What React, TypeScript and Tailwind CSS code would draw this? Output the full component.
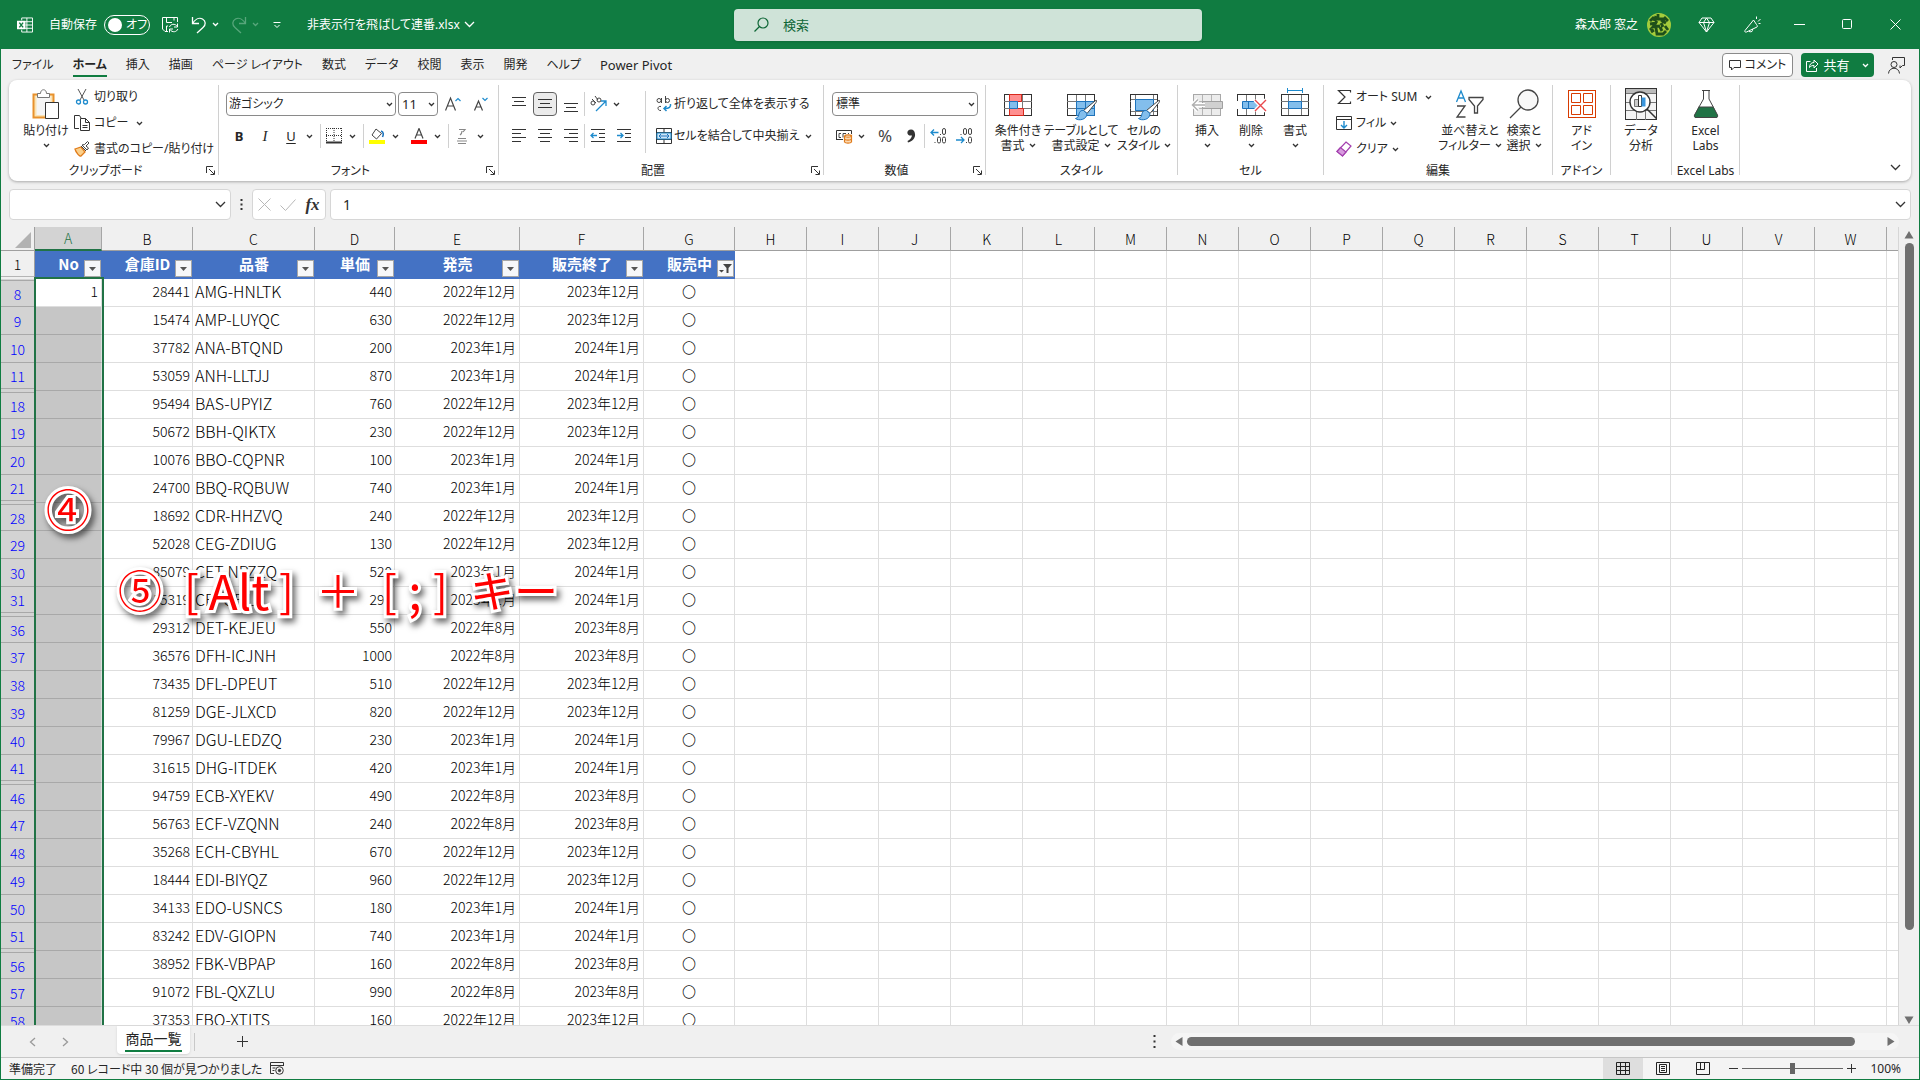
import type { ReactNode } from 'react';

const TABS = ['ファイル', 'ホーム', '挿入', '描画', 'ページ レイアウト', '数式', 'データ', '校閲', '表示', '開発', 'ヘルプ', 'Power Pivot'];

const EXTRA_COLUMNS = ['H', 'I', 'J', 'K', 'L', 'M', 'N', 'O', 'P', 'Q', 'R', 'S', 'T', 'U', 'V', 'W'];

const COLUMNS = [
  { letter: 'A', title: 'No', width: 'w-[67px]' },
  { letter: 'B', title: '倉庫ID', width: 'w-[91px]' },
  { letter: 'C', title: '品番', width: 'w-[122px]' },
  { letter: 'D', title: '単価', width: 'w-[80px]' },
  { letter: 'E', title: '発売', width: 'w-[125px]' },
  { letter: 'F', title: '販売終了', width: 'w-[124px]' },
  { letter: 'G', title: '販売中', width: 'w-[91px]' },
];

// row number, warehouse id, item code, price, release, end of sale
const ROWS: [number, number, string, number, string, string][] = [
  [8, 28441, 'AMG-HNLTK', 440, '2022年12月', '2023年12月'],
  [9, 15474, 'AMP-LUYQC', 630, '2022年12月', '2023年12月'],
  [10, 37782, 'ANA-BTQND', 200, '2023年1月', '2024年1月'],
  [11, 53059, 'ANH-LLTJJ', 870, '2023年1月', '2024年1月'],
  [18, 95494, 'BAS-UPYIZ', 760, '2022年12月', '2023年12月'],
  [19, 50672, 'BBH-QIKTX', 230, '2022年12月', '2023年12月'],
  [20, 10076, 'BBO-CQPNR', 100, '2023年1月', '2024年1月'],
  [21, 24700, 'BBQ-RQBUW', 740, '2023年1月', '2024年1月'],
  [28, 18692, 'CDR-HHZVQ', 240, '2022年12月', '2023年12月'],
  [29, 52028, 'CEG-ZDIUG', 130, '2022年12月', '2023年12月'],
  [30, 85079, 'CET-NPZZQ', 520, '2023年1月', '2024年1月'],
  [31, 15319, 'CFI-GFILF', 290, '2023年1月', '2024年1月'],
  [36, 29312, 'DET-KEJEU', 550, '2022年8月', '2023年8月'],
  [37, 36576, 'DFH-ICJNH', 1000, '2022年8月', '2023年8月'],
  [38, 73435, 'DFL-DPEUT', 510, '2022年12月', '2023年12月'],
  [39, 81259, 'DGE-JLXCD', 820, '2022年12月', '2023年12月'],
  [40, 79967, 'DGU-LEDZQ', 230, '2023年1月', '2024年1月'],
  [41, 31615, 'DHG-ITDEK', 420, '2023年1月', '2024年1月'],
  [46, 94759, 'ECB-XYEKV', 490, '2022年8月', '2023年8月'],
  [47, 56763, 'ECF-VZQNN', 240, '2022年8月', '2023年8月'],
  [48, 35268, 'ECH-CBYHL', 670, '2022年12月', '2023年12月'],
  [49, 18444, 'EDI-BIYQZ', 960, '2022年12月', '2023年12月'],
  [50, 34133, 'EDO-USNCS', 180, '2023年1月', '2024年1月'],
  [51, 83242, 'EDV-GIOPN', 740, '2023年1月', '2024年1月'],
  [56, 38952, 'FBK-VBPAP', 160, '2022年8月', '2023年8月'],
  [57, 91072, 'FBL-QXZLU', 990, '2022年8月', '2023年8月'],
  [58, 37353, 'FBO-XTITS', 160, '2022年12月', '2023年12月'],
];

const Chevron = ({ className = 'text-[#333]' }: { className?: string }) => (
  <svg className={`shrink-0 ${className}`} width="7" height="5" viewBox="0 0 7 5" fill="none" stroke="currentColor" strokeWidth="1.3">
    <path d="M1 1l2.5 2.5L6 1" />
  </svg>
);

const BigChevron = ({ className = 'text-[#333]' }: { className?: string }) => (
  <svg className={`shrink-0 ${className}`} width="11" height="7" viewBox="0 0 11 7" fill="none" stroke="currentColor" strokeWidth="1.3">
    <path d="M1 1l4.5 4.5L10 1" />
  </svg>
);

const Launcher = ({ label }: { label: string }) => (
  <button type="button" aria-label={label} className="absolute right-[3px] bottom-0">
    <svg width="9" height="9" viewBox="0 0 9 9" fill="none" stroke="#333">
      <path d="M.5 7V.5H7M3 3l5 5M8.5 4.5v4h-4" />
    </svg>
  </button>
);

const Group = ({ name, width, launcher, children }: { name: string; width: string; launcher?: boolean; children: ReactNode }) => (
  <section className={`relative flex h-[90px] shrink-0 flex-col border-r border-[#d0d0d0] ${width}`}>
    <div className="flex min-h-0 flex-1">{children}</div>
    <div className={`flex h-2 items-center justify-center whitespace-nowrap ${launcher ? 'pr-4' : ''}`}>
      {name}
      {launcher && <Launcher label={`${name}の設定`} />}
    </div>
  </section>
);

const BigButton = ({ width, icon, lines, drop }: { width: string; icon: ReactNode; lines: string[]; drop?: boolean }) => (
  <button type="button" className={`flex shrink-0 flex-col items-center self-start whitespace-nowrap leading-[15px] ${width}`}>
    <span className="flex h-[38px] items-center justify-center">{icon}</span>
    {lines.map((line, i) => (
      <span key={line} className="flex items-center gap-1">
        {line}
        {drop && i === 1 && <Chevron />}
      </span>
    ))}
    {drop && lines.length === 1 && (
      <span className="flex h-[14px] items-center">
        <Chevron />
      </span>
    )}
  </button>
);

const IconButton = ({ label, width = 'w-[26px]', children }: { label: string; width?: string; children: ReactNode }) => (
  <button type="button" aria-label={label} className={`flex h-6 shrink-0 items-center justify-center ${width}`}>
    {children}
  </button>
);

const DropButton = ({ label }: { label: string }) => (
  <IconButton label={label} width="w-4 pr-[6px]">
    <Chevron />
  </IconButton>
);

const Separator = () => <span className="h-6 w-px shrink-0 bg-[#d0d0d0]" />;

const Lines = ({ d }: { d: string }) => (
  <svg width="16" height="16" viewBox="0 0 16 16" stroke="#333" fill="none">
    <path d={d} />
  </svg>
);

const GridIcon = ({ children, faded }: { children?: ReactNode; faded?: boolean }) => (
  <svg width="32" height="34" viewBox="0 0 32 34" fill="none">
    <rect x="2.5" y="7.5" width="27" height="21" fill={faded ? '#ececec' : '#fff'} stroke={faded ? '#a8a8a8' : '#333'} />
    <path d="M2 14.5h28M2 21.5h28M11.5 8v20M20.5 8v20" stroke={faded ? '#b4b4b4' : '#777'} />
    {children}
  </svg>
);

const Brush = () => (
  <>
    <path d="M30 14c2-1.500 2 0 1 1.500l-9 11-3.500-3z" fill="#fff" stroke="#444" />
    <path d="M18.500 23.500c-4-.5-4.500 3-5 5.500-.5 1.500-2 2-3 2.500 3 2.500 11.500 1.500 11.500-5z" fill="#83beec" stroke="#1e74bd" />
  </>
);

const TitleBar = () => (
  <header className="grid h-[49px] shrink-0 grid-cols-[1fr_468px_1fr] items-center bg-[#107c41] pl-4 text-white">
    <div className="flex items-center whitespace-nowrap">
      <svg width="16" height="18" viewBox="0 0 17 18" fill="none" stroke="#fff">
        <path d="M5 4V1.500h11.500v15H5V14M10.500 1.500v15M5 5.500h11.500M9 9h7.500M5 12.500h11.500" />
        <path d="M0 4.500h9v9H0z" fill="#fff" stroke="none" />
        <path d="M2.500 6.500l4 5M6.500 6.500l-4 5" stroke="#107c41" strokeWidth="1.500" />
      </svg>
      <label className="ml-4 flex items-center gap-[7px]">
        自動保存
        <span className="relative flex h-5 w-[46px] items-center rounded-full border border-white">
          <input type="checkbox" role="switch" className="absolute inset-0 appearance-none" />
          <span className="ml-[3px] size-[14px] shrink-0 rounded-full bg-white" />
          <span className="ml-1 [font-feature-settings:'palt']">オフ</span>
        </span>
      </label>
      <button type="button" aria-label="保存" className="ml-3">
        <svg width="17" height="17" viewBox="0 0 17 17" fill="none" stroke="#fff">
          <path d="M6 15.500H3L.5 13V1.500h15V6M4.500 1.500v5H10M4.500 15v-5H6M12 1.500v3" />
          <path d="M7.500 11c.8-3 5.500-4 8-.5M15.500 7.500v3.500H12M15.800 13c-.8 3-5.500 4-8 .5M7.500 16.500V13H11" />
        </svg>
      </button>
      <button type="button" aria-label="元に戻す" className="ml-3 flex items-center gap-[5px]">
        <svg width="16" height="18" viewBox="0 0 16 18" fill="none" stroke="#fff" strokeWidth="1.300">
          <path d="M1.500 1v6.500H8M1.500 7.500C4 3.500 8 1 11.500 3c3.500 2 3.500 6 .5 8.500L6 17" />
        </svg>
        <Chevron className="text-white" />
      </button>
      <button type="button" aria-label="やり直し" className="ml-3 flex items-center gap-[5px]">
        <svg width="16" height="18" viewBox="0 0 16 18" fill="none" stroke="#58a67b" strokeWidth="1.300">
          <path d="M14.500 1v6.500H8M14.500 7.500C12 3.500 8 1 4.500 3c-3.500 2-3.500 6-.5 8.500L10 17" />
        </svg>
        <Chevron className="text-[#58a67b]" />
      </button>
      <button type="button" aria-label="クイック アクセス" className="ml-[14px]">
        <svg width="8" height="8" viewBox="0 0 8 8" fill="none" stroke="#fff">
          <path d="M.5 1.500h7M1.500 4L4 6.500 6.500 4" />
        </svg>
      </button>
      <button type="button" className="ml-[26px] flex items-center gap-1 [font-feature-settings:'palt']">
        非表示行を飛ばして連番.xlsx
        <BigChevron className="text-white" />
      </button>
    </div>
    <label className="flex h-8 items-center gap-[14px] rounded bg-[#cfe3d8] px-5 text-[#0e6636] shadow-sm">
      <svg width="15" height="15" viewBox="0 0 15 15" fill="none" stroke="currentColor" strokeWidth="1.200">
        <circle cx="9" cy="6" r="5" />
        <path d="M5.500 9.500L.5 14.500" />
      </svg>
      <input type="search" placeholder="検索" aria-label="検索" className="flex-1 bg-transparent text-[13px] outline-none placeholder:text-[#0e6636]" />
    </label>
    <div className="flex items-center justify-end whitespace-nowrap">
      <span>森太郎 窓之</span>
      <svg className="ml-[9px]" width="24" height="24" viewBox="0 0 24 24" fill="none">
        <circle cx="12" cy="12" r="12" fill="#a4cc3c" />
        <path d="M3 8l4-4M9 3l-2 5M11 1v4M5 6h14M21 8l-4-4M14 7l5 3M3 11l7-1M10 8l-4 6 7-1M14 10l2 4M15 7l3 3M3 17l3-3M4 19l3-2M9 15l1 6h6l3-3M13 14l2 4M18 13l3 4" stroke="#1e4f1a" strokeWidth="2.800" />
      </svg>
      <button type="button" aria-label="プレミアム" className="ml-3 flex w-[46px] justify-center">
        <svg width="17" height="16" viewBox="0 0 17 16" fill="none" stroke="#fff">
          <path d="M4 1h9l3 4.500L8.500 15 1 5.500zM1 5.500h15M5.500 5.500L8.500 15l3-9.500L8.500 1z" />
        </svg>
      </button>
      <button type="button" aria-label="新機能" className="flex w-[46px] justify-center">
        <svg width="17" height="17" viewBox="0 0 17 17" fill="none" stroke="#fff">
          <path d="M9.500 4L1 14.500c-.8 1.500.5 1.800 1.500 1.500L13 11c1-1 0-1.500-.5-2.500L9.500 4zM5 15.500c3 1 4-.5 3.500-2.500M12.500 3V.5M14 5.500L16.500 3M14.500 7.500h2" />
        </svg>
      </button>
      <button type="button" aria-label="最小化" className="flex w-12 justify-center">
        <svg width="11" height="11" viewBox="0 0 11 11" stroke="#fff">
          <path d="M0 5.500h11" />
        </svg>
      </button>
      <button type="button" aria-label="最大化" className="flex w-12 justify-center">
        <svg width="11" height="11" viewBox="0 0 11 11" fill="none" stroke="#fff">
          <rect x=".5" y=".5" width="9" height="9" rx="1" />
        </svg>
      </button>
      <button type="button" aria-label="閉じる" className="flex w-12 justify-center">
        <svg width="11" height="11" viewBox="0 0 11 11" stroke="#fff">
          <path d="M.5 .5l10 10M10.500 .5l-10 10" />
        </svg>
      </button>
    </div>
  </header>
);

const TabRow = () => (
  <nav className="flex h-[31px] shrink-0 items-end gap-[19px] pr-[14px] pb-[3px] pl-[11px] [font-feature-settings:'palt']">
    {TABS.map((tab) => (
      <button
        key={tab}
        type="button"
        className={`h-6 border-b-2 leading-6 whitespace-nowrap ${tab === 'ホーム' ? 'border-[#107c41] font-bold' : 'border-transparent'} ${tab === 'Power Pivot' ? 'text-[13px]' : 'text-[12px]'}`}
      >
        {tab}
      </button>
    ))}
    <div className="ml-auto flex items-center">
      <button type="button" className="flex h-6 w-[71px] items-center justify-center gap-1 rounded border border-[#8a8a8a] bg-white">
        <svg width="12" height="12" viewBox="0 0 12 12" fill="none" stroke="#333">
          <path d="M.5 1.500h11v7H5L2.500 11V8.500h-2z" />
        </svg>
        コメント
      </button>
      <button type="button" className="ml-2 flex h-6 w-[73px] items-center justify-center gap-1 rounded bg-[#107c41] text-[13px] text-white">
        <svg width="13" height="13" viewBox="0 0 13 13" fill="none" stroke="#fff">
          <path d="M4.500 2.500h-4v10h10V9M8 1v2.500C5 3.500 3.500 5.500 3.500 8.500 5 6.500 6.500 6.500 8 6.500V9l4-4z" />
        </svg>
        共有
        <span className="ml-2 flex">
          <Chevron className="text-white" />
        </span>
      </button>
      <button type="button" aria-label="共同編集" className="ml-[14px]">
        <svg width="17" height="17" viewBox="0 0 17 17" fill="none" stroke="#333">
          <circle cx="6" cy="7.500" r="3" />
          <path d="M.5 16.500c.5-7 10.500-7 11 0M4.500 3V.5h12v8h-2L12 11V8.500" />
        </svg>
      </button>
    </div>
  </nav>
);

const Ribbon = () => (
  <div className="mx-2 flex h-[101px] shrink-0 items-start rounded-lg bg-white pt-[5px] text-[#262626] shadow-[0_1px_3px_rgba(0,0,0,0.3)] [font-feature-settings:'palt']">
    <Group name="クリップボード" width="w-[210px]" launcher>
      <div className="flex gap-1 pl-[13px]">
        <BigButton
          width="w-[48px]"
          lines={['貼り付け']}
          drop
          icon={
            <svg width="28" height="32" viewBox="0 0 28 32" fill="none">
              <path d="M1.500 6.500h20v23h-20z" fill="#fbe3b3" stroke="#e8912d" strokeWidth="2" />
              <path d="M4.500 8h14v19h-14z" fill="#f5f5f5" />
              <path d="M5.500 9.500V5.500h3c0-5 6-5 6 0h3v4z" fill="#fff" stroke="#777" />
              <path d="M13.500 14.500h13v16h-13z" fill="#fff" stroke="#333" />
            </svg>
          }
        />
        <div className="flex flex-col">
          <button type="button" className="flex h-[26px] shrink-0 items-center gap-1 pb-[2px]">
            <svg width="16" height="16" viewBox="0 0 16 16" fill="none">
              <path d="M4 0l6 11M12 0L6 11" stroke="#555" />
              <circle cx="4.500" cy="13" r="2" stroke="#1e8bcd" strokeWidth="1.300" />
              <circle cx="11.500" cy="13" r="2" stroke="#1e8bcd" strokeWidth="1.300" />
            </svg>
            切り取り
          </button>
          <button type="button" className="flex h-[26px] shrink-0 items-center gap-1 pb-[2px]">
            <svg width="16" height="16" viewBox="0 0 16 16" fill="none" stroke="#333">
              <path d="M5 13.500H.5V.5h5M7 3L5.500 .5M6.500 3.500h5l4 4v8h-9zM11.500 3.500v4h4M8.500 10.500h5M8.500 12.500h5" />
            </svg>
            コピー
            <span className="ml-1 flex">
              <Chevron />
            </span>
          </button>
          <button type="button" className="flex h-[26px] shrink-0 items-center gap-1 pb-[2px] whitespace-nowrap">
            <svg width="16" height="16" viewBox="0 0 16 16" fill="none">
              <path d="M1 8l6-2 4 5-4 4c-1 1-5-3-6-7z" fill="#fbd08b" stroke="#e07b1a" strokeWidth="1.300" />
              <path d="M7 5l5 5M8 4l5 5 1.500-2L12 5l3-3-1.500-1.500L10.500 3.500z" stroke="#444" fill="#fff" />
            </svg>
            書式のコピー/貼り付け
          </button>
        </div>
      </div>
    </Group>

    <Group name="フォント" width="w-[280px]" launcher>
      <div className="flex flex-col gap-2 pl-[7px] pt-[7px]">
        <div className="flex items-center gap-[2px]">
          <label className="relative flex items-center">
            <select aria-label="フォント" className="h-6 w-[170px] appearance-none rounded border border-[#8a8a8a] bg-white pl-[2px] leading-[14px]">
              <option>游ゴシック</option>
            </select>
            <Chevron className="pointer-events-none absolute right-[3px] text-[#333]" />
          </label>
          <label className="relative flex items-center">
            <select aria-label="フォント サイズ" className="h-6 w-10 appearance-none rounded border border-[#8a8a8a] bg-white pl-[3px] text-[13px] leading-[14px]">
              <option>11</option>
            </select>
            <Chevron className="pointer-events-none absolute right-[3px] text-[#333]" />
          </label>
          <IconButton label="フォント サイズの拡大">
            <svg width="16" height="16" viewBox="0 0 16 16" fill="none" stroke="#444" strokeWidth="1.200">
              <path d="M.5 14.500L5.500 2l5 12.500M2.500 10h6" />
              <path d="M10.500 5L13 2.500 15.500 5" stroke="#1e8bcd" />
            </svg>
          </IconButton>
          <IconButton label="フォント サイズの縮小">
            <svg width="16" height="16" viewBox="0 0 16 16" fill="none" stroke="#444" strokeWidth="1.200">
              <path d="M1.500 14.500L5.500 5l4 9.500M3 11h5" />
              <path d="M9.500 2L12 4.500 14.500 2" stroke="#1e8bcd" />
            </svg>
          </IconButton>
        </div>
        <div className="flex items-center">
          <IconButton label="太字"><b className="text-[13px]">B</b></IconButton>
          <IconButton label="斜体"><i className="font-['Liberation_Serif',serif] text-[15px]">I</i></IconButton>
          <IconButton label="下線"><u className="text-[13px] underline-offset-2">U</u></IconButton>
          <DropButton label="下線の種類" />
          <Separator />
          <IconButton label="罫線">
            <svg width="16" height="16" viewBox="0 0 16 16" stroke="#333">
              <path d="M0 .5h16M.5 0v14M15.500 0v14M8 0v14M0 7.500h16" strokeDasharray="1 1" />
              <path d="M0 14.500h16" strokeWidth="2" />
            </svg>
          </IconButton>
          <DropButton label="罫線の種類" />
          <Separator />
          <IconButton label="塗りつぶしの色">
            <svg width="16" height="16" viewBox="0 0 16 16" fill="none">
              <path d="M7 1l5.500 4.500-5 5.500L3 7z" stroke="#444" />
              <path d="M12 3c3 1 2.500 4 1.500 6" stroke="#1e74bd" strokeWidth="1.600" />
              <path d="M0 12h16v4H0z" fill="#ffff00" />
            </svg>
          </IconButton>
          <DropButton label="塗りつぶしの種類" />
          <IconButton label="フォントの色">
            <svg width="16" height="16" viewBox="0 0 16 16" fill="none">
              <path d="M4 10.500L8 .5l4 10M5.500 7h5" stroke="#444" strokeWidth="1.200" />
              <path d="M0 12h16v4H0z" fill="#ff0000" />
            </svg>
          </IconButton>
          <DropButton label="フォントの色の種類" />
          <Separator />
          <IconButton label="ふりがな">
            <svg width="12" height="17" viewBox="0 0 12 17" fill="none" stroke="#888">
              <path d="M3 1.500h6L7 4M6 3c0 2-.5 3-2 4M2 10.500h8M1 13h10M2 15.500h8" strokeWidth="1.200" />
            </svg>
          </IconButton>
          <DropButton label="ふりがなの種類" />
        </div>
      </div>
    </Group>

    <Group name="配置" width="w-[325px]" launcher>
      <div className="flex flex-col gap-2 pl-[7px] pt-[7px]">
        <div className="flex">
          <IconButton label="上揃え"><Lines d="M1 1.500h14M3 5.500h10M1 9.500h14" /></IconButton>
          <button type="button" aria-label="上下中央揃え" className="mx-px flex size-6 items-center justify-center rounded border border-[#616161] bg-[#ebebeb]">
            <Lines d="M1 3.500h14M3 7.500h10M1 11.500h14" />
          </button>
          <IconButton label="下揃え"><Lines d="M1 7.500h14M3 11.500h10M1 15.500h14" /></IconButton>
          <Separator />
          <IconButton label="方向">
            <svg width="17" height="16" viewBox="0 0 17 16" fill="none">
              <circle cx="3" cy="7" r="2" stroke="#444" />
              <circle cx="9" cy="4" r="2" stroke="#444" />
              <path d="M2 3l4 4M5 0l3 4" stroke="#444" />
              <path d="M6 15l9.500-9.500M11 5h5v5" stroke="#1e8bcd" strokeWidth="1.300" />
            </svg>
          </IconButton>
          <DropButton label="方向の種類" />
        </div>
        <div className="flex">
          <IconButton label="左揃え"><Lines d="M1 1.500h14M1 5.500h9M1 9.500h14M1 13.500h9" /></IconButton>
          <IconButton label="中央揃え"><Lines d="M1 1.500h14M3 5.500h10M1 9.500h14M3 13.500h10" /></IconButton>
          <IconButton label="右揃え"><Lines d="M1 1.500h14M6 5.500h9M1 9.500h14M6 13.500h9" /></IconButton>
          <Separator />
          <IconButton label="インデントを減らす">
            <svg width="16" height="16" viewBox="0 0 16 16" fill="none" stroke="#333">
              <path d="M1 1.500h14M9 5.500h6M9 9.500h6M1 13.500h14" />
              <path d="M7 7.500H1M3.500 5L1 7.500 3.500 10" stroke="#1e8bcd" strokeWidth="1.300" />
            </svg>
          </IconButton>
          <IconButton label="インデントを増やす">
            <svg width="16" height="16" viewBox="0 0 16 16" fill="none" stroke="#333">
              <path d="M1 1.500h14M9 5.500h6M9 9.500h6M1 13.500h14" />
              <path d="M1 7.500h6M4.500 5L7 7.500 4.500 10" stroke="#1e8bcd" strokeWidth="1.300" />
            </svg>
          </IconButton>
        </div>
      </div>
      <div className="ml-2 mt-[6px] h-[62px] w-px bg-[#d0d0d0]" />
      <div className="flex flex-col gap-2 pl-[10px] pt-[7px]">
        <button type="button" className="flex h-6 items-center gap-[2px] whitespace-nowrap">
          <svg width="16" height="16" viewBox="0 0 16 16" fill="none" stroke="#444">
            <circle cx="3" cy="4.500" r="2" />
            <path d="M5.500 2v5M9.500 0v7M5 10.500c-4-1-4 4.500 0 4" />
            <circle cx="11.500" cy="4.500" r="2" />
            <path d="M14.500 8c.5 3-1 4.500-6 4.500M10.500 10L8 12.500l2.500 2.500" stroke="#1e8bcd" strokeWidth="1.500" />
          </svg>
          折り返して全体を表示する
        </button>
        <button type="button" className="flex h-6 items-center gap-[2px] whitespace-nowrap">
          <svg width="16" height="16" viewBox="0 0 16 16" fill="none" stroke="#333">
            <path d="M.5 .5h15v15H.5zM.5 4.500h15M.5 11.500h15M8 .5v4M8 11.500v4" />
            <path d="M1 5h14v6H1z" fill="#cfe6f7" stroke="#1e8bcd" />
            <path d="M3 8h10M5 6L3 8l2 2M11 6l2 2-2 2" stroke="#1e74bd" />
          </svg>
          セルを結合して中央揃え
          <span className="ml-1 flex">
            <Chevron />
          </span>
        </button>
      </div>
    </Group>

    <Group name="数値" width="w-[162px]" launcher>
      <div className="flex flex-col gap-2 pl-2 pt-[7px]">
        <label className="relative flex items-center">
          <select aria-label="表示形式" className="h-6 w-[146px] appearance-none rounded border border-[#8a8a8a] bg-white pl-[3px] leading-[14px]">
            <option>標準</option>
          </select>
          <Chevron className="pointer-events-none absolute right-[3px] text-[#333]" />
        </label>
        <div className="flex items-center">
          <IconButton label="通貨表示形式" width="w-6">
            <svg width="18" height="16" viewBox="0 0 18 16" fill="none">
              <path d="M1 11.500h7M1.500 11.500v-9h15V6" stroke="#333" />
              <path d="M6 5.500H4v4h2M8 9.500v-4h3M14 5.500h-1" stroke="#444" />
              <path d="M9.500 8v6c1 1.500 6 1.500 7 0V8c-1 1.500-6 1.500-7 0 1-1.500 6-1.500 7 0M9.500 11c1 1.500 6 1.500 7 0" fill="#fbd9b3" stroke="#e07b1a" strokeWidth="1.200" />
            </svg>
          </IconButton>
          <DropButton label="通貨の種類" />
          <IconButton label="パーセント スタイル"><span className="text-[17px] text-[#444]">%</span></IconButton>
          <IconButton label="桁区切りスタイル">
            <svg width="9" height="14" viewBox="0 0 9 14" fill="#333">
              <path d="M4 .5c-5 0-5 7 1 6C4.500 9 3 11 .5 12l.5 1.500C6 12 8.500 8.500 8 5 7.700 2 6.500 .5 4 .5z" />
            </svg>
          </IconButton>
          <Separator />
          <IconButton label="小数点以下の表示桁数を増やす">
            <svg width="17" height="16" viewBox="0 0 17 16" fill="none" stroke="#444">
              <path d="M8.500 4.500H1M4 1.500l-3 3 3 3" stroke="#1e8bcd" strokeWidth="1.300" />
              <rect x="12.500" y=".5" width="3" height="6" rx="1.500" />
              <rect x="7.500" y="9" width="3" height="6" rx="1.500" />
              <rect x="12.500" y="9" width="3" height="6" rx="1.500" />
              <path d="M10 6.500h1M4.500 14.500h1" />
            </svg>
          </IconButton>
          <IconButton label="小数点以下の表示桁数を減らす">
            <svg width="17" height="16" viewBox="0 0 17 16" fill="none" stroke="#444">
              <path d="M0 12h8M5 9l3 3-3 3" stroke="#1e8bcd" strokeWidth="1.300" />
              <rect x="7.500" y=".5" width="3" height="6" rx="1.500" />
              <rect x="12.500" y=".5" width="3" height="6" rx="1.500" />
              <rect x="12.500" y="9" width="3" height="6" rx="1.500" />
              <path d="M4.500 6.500h1M10 14.500h1" />
            </svg>
          </IconButton>
        </div>
      </div>
    </Group>

    <Group name="スタイル" width="w-[192px]">
      <div className="flex pl-[7px]">
        <BigButton
          width="w-[50px]"
          lines={['条件付き', '書式']}
          drop
          icon={
            <GridIcon>
              <path d="M7.500 7.500h12v7h-12zM7.500 21.500h14v7h-14z" fill="#ff8f8f" stroke="#d9291c" />
              <path d="M7.500 14.500h8v7h-8z" fill="#83beec" stroke="#1e74bd" />
            </GridIcon>
          }
        />
        <BigButton
          width="w-[76px]"
          lines={['テーブルとして', '書式設定']}
          drop
          icon={
            <GridIcon>
              <path d="M11.500 14.500h18v14h-18z" fill="#83beec" stroke="#1e74bd" />
              <path d="M11 21.500h18M20.500 15v13" stroke="#1e74bd" />
              <Brush />
            </GridIcon>
          }
        />
        <BigButton
          width="w-[50px]"
          lines={['セルの', 'スタイル']}
          drop
          icon={
            <GridIcon>
              <path d="M3 8h26v20H3z" fill="#fff" />
              <path d="M3 12.500h26M3 24.500h26M7.500 8v20M25.500 8v20" stroke="#777" />
              <path d="M7.500 12.500h18v11h-18z" fill="#83beec" stroke="#1e74bd" />
              <Brush />
            </GridIcon>
          }
        />
      </div>
    </Group>

    <Group name="セル" width="w-[146px]">
      <div className="flex pl-[7px]">
        <BigButton
          width="w-[44px]"
          lines={['挿入']}
          drop
          icon={
            <GridIcon faded>
              <path d="M11.500 14.500h20v7h-20z" fill="#d0d0d0" stroke="#a0a0a0" />
              <path d="M14 18H2M7 12.500L1.500 18 7 23.500" stroke="#fff" strokeWidth="4" />
              <path d="M14 18H2M7 12.500L1.500 18 7 23.500" stroke="#b0b0b0" strokeWidth="1.500" />
            </GridIcon>
          }
        />
        <BigButton
          width="w-[44px]"
          lines={['削除']}
          drop
          icon={
            <GridIcon>
              <path d="M1 14h30v8H1z" fill="#fff" />
              <path d="M7.500 14.500h13l4 3.500-4 3.500h-13z" fill="#83beec" stroke="#1e74bd" />
              <path d="M13.500 14.500v7" stroke="#1e74bd" />
              <path d="M20 13l11 11M31 13L20 24" stroke="#fff" strokeWidth="4" />
              <path d="M20 13l11 11M31 13L20 24" stroke="#e8474c" strokeWidth="1.400" />
            </GridIcon>
          }
        />
        <BigButton
          width="w-[44px]"
          lines={['書式']}
          drop
          icon={
            <GridIcon>
              <path d="M3 8h26v20H3z" fill="#fff" />
              <path d="M3 14.500h26M3 21.500h26M9.500 8v20M22.500 8v20" stroke="#777" />
              <path d="M9.500 14.500h13v7h-13z" fill="#83beec" stroke="#1e74bd" />
              <path d="M8 3.500h16M8.500 1v5M23.500 1v5" stroke="#1e8bcd" />
            </GridIcon>
          }
        />
      </div>
    </Group>

    <Group name="編集" width="w-[229px]">
      <div className="flex w-[118px] flex-col pl-3">
        <button type="button" className="flex h-[26px] shrink-0 items-center gap-1 pb-[2px] whitespace-nowrap">
          <svg width="16" height="16" viewBox="0 0 16 16" fill="none" stroke="#333">
            <path d="M14.500 3.500v-2h-12L9 8l-6.500 6.500h12v-2" strokeWidth="1.200" />
          </svg>
          オート SUM
          <span className="ml-1 flex">
            <Chevron />
          </span>
        </button>
        <button type="button" className="flex h-[26px] shrink-0 items-center gap-1 pb-[2px]">
          <svg width="16" height="16" viewBox="0 0 16 16" fill="none" stroke="#333">
            <path d="M.5 1.500h15v13H.5zM.5 4.500h15" />
            <path d="M8 6v7M5 10l3 3 3-3" stroke="#1e8bcd" strokeWidth="1.400" />
          </svg>
          フィル
          <Chevron />
        </button>
        <button type="button" className="flex h-[26px] shrink-0 items-center gap-1 pb-[2px]">
          <svg width="16" height="16" viewBox="0 0 16 16" fill="none" stroke="#a33fae" strokeWidth="1.200">
            <path d="M10 1l5 4-8.500 10-5.500-4.500z" fill="#fff" />
            <path d="M4.500 6.500L1 10.500 6.500 15l3.500-4z" fill="#d89bdf" />
          </svg>
          クリア
          <Chevron />
        </button>
      </div>
      <BigButton
        width="w-[56px]"
        lines={['並べ替えと', 'フィルター']}
        drop
        icon={
          <svg width="30" height="30" viewBox="0 0 30 30" fill="none" stroke="#444" strokeWidth="1.300">
            <path d="M1.500 13L6 2l4.500 11M3 9h6" stroke="#1e8bcd" />
            <path d="M2 17h8L2 28h8.500M14 8.500h14v2L22.500 17v7h-3v-7L14 10.500z" />
          </svg>
        }
      />
      <BigButton
        width="w-[52px]"
        lines={['検索と', '選択']}
        drop
        icon={
          <svg width="30" height="30" viewBox="0 0 30 30" fill="none" stroke="#444" strokeWidth="1.300">
            <circle cx="19" cy="11" r="10" fill="#f8f8f8" />
            <path d="M12 18L1 29" />
          </svg>
        }
      />
    </Group>

    <Group name="アドイン" width="w-[58px]">
      <BigButton
        width="w-[57px]"
        lines={['アド', 'イン']}
        icon={
          <svg width="28" height="28" viewBox="0 0 28 28" fill="none" stroke="#d83b01">
            <rect x=".5" y=".5" width="27" height="27" />
            <path d="M3.500 3.500h9v9h-9zM15.500 3.500h9v9h-9zM3.500 15.500h9v9h-9zM15.500 15.500h9v9h-9z" />
          </svg>
        }
      />
    </Group>

    <Group name="" width="w-[61px]">
      <BigButton
        width="w-[60px]"
        lines={['データ', '分析']}
        icon={
          <svg width="32" height="32" viewBox="0 0 32 32" fill="none">
            <rect x=".5" y=".5" width="31" height="31" fill="#f4f4f4" stroke="#333" />
            <path d="M1 1h30v4H1z" fill="#bbb" />
            <path d="M1 5.500h30M1 14.500h30M1 22.500h30M11.500 22v10M20.500 22v10" stroke="#777" />
            <circle cx="15" cy="14" r="10" fill="#fff" stroke="#333" strokeWidth="1.400" />
            <path d="M9.500 11.500h4v7h-4z" fill="#ccc" stroke="#777" />
            <path d="M13.500 7.500h3v11h-3z" fill="#fff" stroke="#333" />
            <path d="M16.500 9.500h4v9h-4z" fill="#3a96dd" />
            <path d="M22 21l10 10" stroke="#333" strokeWidth="1.500" />
          </svg>
        }
      />
    </Group>

    <Group name="Excel Labs" width="w-[68px]">
      <BigButton
        width="w-[67px]"
        lines={['Excel', 'Labs']}
        icon={
          <svg width="26" height="30" viewBox="0 0 26 30" fill="none">
            <path d="M5.500 18h15l4 8c.5 1.500 0 3-1.500 3H3c-1.500 0-2-1.500-1.500-3z" fill="#217346" />
            <path d="M9 1.500h8M10.500 1.500V10L1.500 26c-.5 1.500 0 2.500 1.500 2.500h20c1.500 0 2-1 1.500-2.500L16 10V1.500M5.500 18h15" stroke="#444" />
          </svg>
        }
      />
    </Group>
    <button type="button" aria-label="リボンを折りたたむ" className="mr-[10px] mt-[79px] ml-auto">
      <BigChevron />
    </button>
  </div>
);

const FormulaBar = () => (
  <div className="mx-2 mt-2 flex h-[31px] shrink-0 items-center">
    <label className="flex h-full w-[222px] items-center rounded border border-[#d6d6d6] bg-white pr-1">
      <input aria-label="名前ボックス" className="min-w-0 flex-1 bg-transparent px-2 outline-none" />
      <BigChevron />
    </label>
    <svg className="mx-[9px]" width="3" height="11" viewBox="0 0 3 11" fill="#333">
      <path d="M.5 0h2v2h-2zM.5 4.500h2v2h-2zM.5 9h2v2h-2z" />
    </svg>
    <div className="flex h-full w-[74px] items-center justify-center gap-[9px] rounded border border-[#d6d6d6] bg-white">
      <button type="button" aria-label="キャンセル">
        <svg width="13" height="13" viewBox="0 0 13 13" stroke="#b8b8b8">
          <path d="M.5 .5l12 12M12.500 .5l-12 12" />
        </svg>
      </button>
      <button type="button" aria-label="入力">
        <svg width="16" height="12" viewBox="0 0 16 12" fill="none" stroke="#b8b8b8">
          <path d="M.5 6.500l5 5 10-11" />
        </svg>
      </button>
      <button type="button" aria-label="関数の挿入" className="font-['Liberation_Serif',serif] text-[17px] leading-5 font-bold text-[#333] italic">
        fx
      </button>
    </div>
    <label className="ml-1 flex h-full flex-1 items-center rounded border border-[#d6d6d6] bg-white pr-1">
      <input aria-label="数式バー" defaultValue="1" className="min-w-0 flex-1 bg-transparent pl-3 text-[14px] outline-none" />
      <BigChevron />
    </label>
  </div>
);

const FilterButton = ({ active }: { active?: boolean }) => (
  <button type="button" aria-label="フィルター" className="absolute right-px bottom-[2px] flex size-[17px] items-center justify-center border border-[#a6a6a6] bg-[#f6f7f9]">
    {active ? (
      <svg width="13" height="11" viewBox="0 0 13 11" fill="#444">
        <path d="M4 1h9l-3.500 4v5h-2V5zM0 7h5L2.500 9.500z" />
      </svg>
    ) : (
      <svg width="7" height="4" viewBox="0 0 7 4" fill="#555">
        <path d="M0 0h7L3.500 4z" />
      </svg>
    )}
  </button>
);

const RowNumber = ({ n, gapBefore, gapAfter }: { n: number; gapBefore: boolean; gapAfter: boolean }) => (
  <th scope="row" className={`border-r border-[#9f9f9f] p-0 font-light ${n === 1 ? 'bg-[#f0f0f0] text-black' : 'bg-[#d3d3d3] text-[#0000ff]'}`}>
    <div className="flex h-7 flex-col">
      <div
        className={`flex flex-1 items-center justify-center border-b ${n === 1 ? 'border-[#b5b5b5]' : 'border-[#a8a8a8]'} ${gapBefore ? 'mt-px border-t' : ''} ${gapAfter ? 'mb-[2px]' : ''}`}
      >
        {n}
      </div>
    </div>
  </th>
);

const Sheet = () => (
  <main className="mt-[7px] flex min-h-0 flex-1">
    <div className="relative min-w-0 flex-1 overflow-hidden border-r border-[#d6d6d6]">
      <table className="w-full table-fixed border-separate border-spacing-0 bg-white text-[14px] leading-5 font-light text-black">
        <colgroup>
          <col className="w-[34px]" />
          {COLUMNS.map((c) => (
            <col key={c.letter} className={c.width} />
          ))}
          {EXTRA_COLUMNS.map((c) => (
            <col key={c} className="w-[72px]" />
          ))}
          <col />
        </colgroup>
        <thead>
          <tr className="h-6 bg-[#f0f0f0]">
            <td className="border-r border-b border-[#9f9f9f] p-0">
              <svg className="mt-[2px] ml-[14px]" width="16" height="16" viewBox="0 0 16 16" fill="#b2b2b2">
                <path d="M16 0v16H0z" />
              </svg>
            </td>
            {COLUMNS.map((c) => (
              <th
                key={c.letter}
                className={`border-r border-r-[#a6a6a6] p-0 font-light ${c.letter === 'A' ? 'border-b-2 border-b-[#217346] bg-[#d3d3d3] text-[#217346]' : 'border-b border-b-[#9f9f9f]'}`}
              >
                {c.letter}
              </th>
            ))}
            {EXTRA_COLUMNS.map((c) => (
              <th key={c} className="border-r border-b border-r-[#a6a6a6] border-b-[#9f9f9f] p-0 font-light">
                {c}
              </th>
            ))}
            <td className="border-b border-[#9f9f9f] p-0" />
          </tr>
        </thead>
        <tbody>
          <tr className="h-7">
            <RowNumber n={1} gapBefore={false} gapAfter />
            {COLUMNS.map((c) => (
              <th key={c.letter} className="relative bg-[#4472c4] p-0 pb-[2px] text-[15px] font-bold text-white">
                {c.title}
                <FilterButton active={c.letter === 'G'} />
              </th>
            ))}
            {EXTRA_COLUMNS.map((c) => (
              <td key={c} className="border-r border-b border-[#dedede] p-0" />
            ))}
            <td className="border-b border-[#dedede] p-0" />
          </tr>
          {ROWS.map(([n, id, code, price, from, to], i) => (
            <tr key={n} className="h-7 whitespace-nowrap [&>td]:border-r [&>td]:border-b [&>td]:border-[#dedede] [&>td]:p-0 [&>td]:pb-1">
              <RowNumber n={n} gapBefore={i === 0 || n - ROWS[i - 1][0] > 1} gapAfter={i < ROWS.length - 1 && ROWS[i + 1][0] - n > 1} />
              {i === 0 ? (
                <td>
                  <div className="pr-[3px] text-right">1</div>
                </td>
              ) : (
                <td className="border-b-[#a8a8a8]! bg-[#c6c6c6]" />
              )}
              <td>
                <div className="pr-[2px] text-right">{id}</div>
              </td>
              <td>
                <div className="pl-[2px] text-[16px]">{code}</div>
              </td>
              <td>
                <div className="pr-[2px] text-right">{price}</div>
              </td>
              <td>
                <div className="pr-[3px] text-right">{from}</div>
              </td>
              <td>
                <div className="pr-[3px] text-right">{to}</div>
              </td>
              <td className="text-center">〇</td>
              {EXTRA_COLUMNS.map((c) => (
                <td key={c} />
              ))}
              <td className="border-r-0!" />
            </tr>
          ))}
        </tbody>
      </table>

      {/* selection frame */}
      <div className="pointer-events-none absolute top-[50px] -bottom-1 left-[33px] w-[70px] border-2 border-[#217346]" />

      {/* step callouts */}
      <div className="pointer-events-none absolute top-[259px] left-[45px] text-[44px] leading-none text-[#ff0000] drop-shadow-[3px_4px_3px_rgba(0,0,0,0.6)] [-webkit-text-stroke:6px_white] [paint-order:stroke_fill]">
        ④
      </div>
      <div className="pointer-events-none absolute top-[338px] left-[117px] flex items-center gap-[22px] text-[44px] leading-none whitespace-nowrap text-[#ff0000] drop-shadow-[3px_4px_3px_rgba(0,0,0,0.6)] [-webkit-text-stroke:6px_white] [paint-order:stroke_fill]">
        <span>⑤</span>
        <span className="flex w-[110px] items-center justify-between">
          <span>[</span>
          <span className="text-[48px]">Alt</span>
          <span>]</span>
        </span>
        <span>＋</span>
        <span className="flex w-[66px] items-center justify-between">
          <span>[</span>
          <span className="text-[48px]">;</span>
          <span>]</span>
        </span>
        <span>キー</span>
      </div>
    </div>
    <div className="flex w-5 shrink-0 flex-col items-center gap-1 pt-1 pb-px">
      <svg width="10" height="8" viewBox="0 0 10 8" fill="#707070">
        <path d="M5 0l4.500 7.500h-9z" />
      </svg>
      <div className="mb-[82px] w-[9px] flex-1 rounded-full bg-[#707070]" />
      <svg width="10" height="8" viewBox="0 0 10 8" fill="#707070">
        <path d="M5 8L.5 .5h9z" />
      </svg>
    </div>
  </main>
);

const SheetTabs = () => (
  <div className="flex h-8 shrink-0 items-center border-t border-[#dcdcdc]">
    <button type="button" aria-label="前のシート" className="ml-7">
      <svg width="7" height="10" viewBox="0 0 7 10" fill="none" stroke="#999" strokeWidth="1.300">
        <path d="M6 1L1.500 5 6 9" />
      </svg>
    </button>
    <button type="button" aria-label="次のシート" className="ml-[26px]">
      <svg width="7" height="10" viewBox="0 0 7 10" fill="none" stroke="#999" strokeWidth="1.300">
        <path d="M1 1l4.500 4L1 9" />
      </svg>
    </button>
    <button type="button" className="ml-12 h-7 w-[73px] self-start rounded-b bg-white px-2 shadow-sm">
      <span className="block h-6 border-b-2 border-[#107c41] text-[14px] leading-5">商品一覧</span>
    </button>
    <span className="ml-1 h-[18px] w-px bg-[#c8c8c8]" />
    <button type="button" aria-label="新しいシート" className="ml-[42px]">
      <svg width="11" height="11" viewBox="0 0 11 11" stroke="#333">
        <path d="M5.500 0v11M0 5.500h11" />
      </svg>
    </button>
    <div className="ml-auto flex w-[766px] items-center">
      <svg width="3" height="13" viewBox="0 0 3 13" fill="#333">
        <path d="M.5 0h2v2h-2zM.5 5.500h2v2h-2zM.5 11h2v2h-2z" />
      </svg>
      <div className="mr-5 ml-[15px] flex h-[17px] flex-1 items-center gap-1 rounded-full bg-[#f5f5f5] px-1">
        <svg width="8" height="9" viewBox="0 0 8 9" fill="#707070">
          <path d="M7.500 0v9L.5 4.500z" />
        </svg>
        <div className="mr-7 h-[9px] flex-1 rounded-full bg-[#707070]" />
        <svg width="8" height="9" viewBox="0 0 8 9" fill="#707070">
          <path d="M.5 0v9l7-4.500z" />
        </svg>
      </div>
    </div>
  </div>
);

const StatusBar = () => (
  <footer className="flex h-[22px] shrink-0 items-center border-t border-[#c6c6c6] bg-[#f4f4f4] pl-2 font-['Noto_Sans_CJK_JP',sans-serif] [font-feature-settings:'palt']">
    <span>準備完了</span>
    <span className="ml-[14px]">60 レコード中 30 個が見つかりました</span>
    <svg className="ml-2" width="15" height="13" viewBox="0 0 15 13" fill="none" stroke="#333">
      <path d="M4 11.500H.5v-11h13V4M.5 3.500h13M2.500 6h3M2.500 8.500h2" />
      <circle cx="9.500" cy="8.500" r="3.800" />
      <circle cx="9.500" cy="8.500" r="1.200" fill="#333" />
    </svg>
    <div className="ml-auto flex h-full items-center pr-[18px]">
      <button type="button" aria-label="標準" className="flex h-full w-10 items-center justify-center bg-[#dedede]">
        <svg width="14" height="13" viewBox="0 0 14 13" fill="none" stroke="#222">
          <path d="M.5 .5h13v12H.5zM.5 4.500h13M.5 8.500h13M4.500 .5v12M9.500 .5v12" />
        </svg>
      </button>
      <button type="button" aria-label="ページ レイアウト" className="flex w-10 justify-center">
        <svg width="14" height="13" viewBox="0 0 14 13" fill="none" stroke="#222">
          <path d="M.5 .5h13v12H.5zM3.500 2.500h7v8h-7zM5 4.500h4M5 6.500h4M5 8.500h4" />
        </svg>
      </button>
      <button type="button" aria-label="改ページ プレビュー" className="flex w-10 justify-center">
        <svg width="14" height="13" viewBox="0 0 14 13" fill="none" stroke="#222">
          <path d="M.5 .5h13v12H.5zM4.500 .5v7M.5 7.500h8v-7" />
        </svg>
      </button>
      <button type="button" aria-label="縮小" className="ml-[6px]">
        <svg width="9" height="9" viewBox="0 0 9 9" stroke="#333">
          <path d="M0 4.500h9" />
        </svg>
      </button>
      <input
        type="range"
        aria-label="ズーム"
        className="mx-1 h-[13px] w-[101px] appearance-none bg-[linear-gradient(#666,#666)] bg-[length:100%_1px] bg-center bg-no-repeat [&::-webkit-slider-thumb]:h-[11px] [&::-webkit-slider-thumb]:w-[5px] [&::-webkit-slider-thumb]:appearance-none [&::-webkit-slider-thumb]:bg-[#666]"
      />
      <button type="button" aria-label="拡大">
        <svg width="9" height="9" viewBox="0 0 9 9" stroke="#333">
          <path d="M0 4.500h9M4.500 0v9" />
        </svg>
      </button>
      <span className="ml-[14px] font-['Noto_Sans',sans-serif]">100%</span>
    </div>
  </footer>
);

const App = () => {
  return (
    <div className="flex h-screen flex-col overflow-hidden border-x border-b border-[#107c41] bg-[#f0f0f0] font-['Noto_Sans','Noto_Sans_CJK_JP',sans-serif] text-[12px] leading-4 text-[#262626]">
      <TitleBar />
      <TabRow />
      <Ribbon />
      <FormulaBar />
      <div className="flex min-h-0 flex-1 flex-col font-['Noto_Sans_CJK_JP',sans-serif]">
        <Sheet />
        <SheetTabs />
      </div>
      <StatusBar />
    </div>
  );
};

export default App;
